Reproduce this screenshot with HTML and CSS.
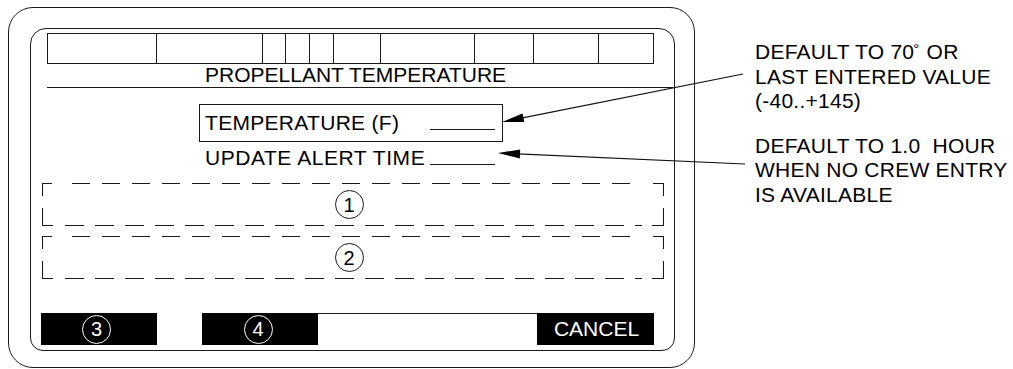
FILE: index.html
```html
<!DOCTYPE html>
<html>
<head>
<meta charset="utf-8">
<title>Propellant Temperature</title>
<link rel="stylesheet" href="styles.css">
</head>
<body>
<div class="page">
  <div class="device">
    <div class="screen">
      <div class="statusbar">
        <span class="cell"></span><span class="cell"></span><span class="cell"></span><span class="cell"></span><span class="cell"></span><span class="cell"></span><span class="cell"></span><span class="cell"></span><span class="cell"></span><span class="cell"></span>
      </div>
      <div class="title">PROPELLANT TEMPERATURE</div>
      <div class="form">
        <div class="row boxed"><span class="label">TEMPERATURE (F)</span><span class="field"></span></div>
        <div class="row plain"><span class="label">UPDATE ALERT TIME</span><span class="field"></span></div>
      </div>
      <div class="zone zone-a">
        <svg class="dash" viewBox="0 0 622 43" width="622" height="43">
          <path d="M0.5 13 V0.5 H10 M611 0.5 H621.5 V13 M0.5 25 V42.5 H11 M610 42.5 H621.5 V25"/>
          <line class="run-top" x1="30" y1="0.5" x2="600" y2="0.5"/>
          <line class="run-bot" x1="23" y1="42.5" x2="600" y2="42.5"/>
        </svg>
        <span class="num">1</span>
      </div>
      <div class="zone zone-b">
        <svg class="dash" viewBox="0 0 622 43" width="622" height="43">
          <path d="M0.5 13 V0.5 H10 M611 0.5 H621.5 V13 M0.5 25 V42.5 H11 M610 42.5 H621.5 V25"/>
          <line class="run-top" x1="30" y1="0.5" x2="600" y2="0.5"/>
          <line class="run-bot" x1="23" y1="42.5" x2="600" y2="42.5"/>
        </svg>
        <span class="num">2</span>
      </div>
      <div class="softkeys">
        <div class="key dark k3"><span class="num inv">3</span></div>
        <div class="key gap"></div>
        <div class="key dark k4"><span class="num inv">4</span></div>
        <div class="key blank"></div>
        <div class="key dark cancel">CANCEL</div>
      </div>
    </div>
  </div>
  <div class="notes">
    <p class="note note-a">DEFAULT TO 70<span class="deg">°</span> OR<br>LAST ENTERED VALUE<br>(-40..+145)</p>
    <p class="note note-b">DEFAULT TO 1.0&nbsp; HOUR<br>WHEN NO CREW ENTRY<br>IS AVAILABLE</p>
  </div>
  <svg class="arrows" width="1013" height="369" viewBox="0 0 1013 369">
    <line x1="743" y1="74" x2="515" y2="119.4"/>
    <polygon points="502,122 524.3,122.1 522.6,113.5"/>
    <line x1="745" y1="164" x2="512" y2="153.6"/>
    <polygon points="498,153 520.2,149.5 519.8,158.5"/>
  </svg>
</div>
</body>
</html>
```

FILE: styles.css
```css
* { box-sizing: border-box; }

html, body {
  margin: 0;
  padding: 0;
  background: #fff;
}

body {
  font-family: "Liberation Sans", Arial, sans-serif;
  font-size: 21px;
  color: #000;
}

.page {
  position: relative;
  width: 1013px;
  height: 369px;
  display: flex;
  align-items: flex-start;
  overflow: hidden;
}

.device {
  margin-left: 8px;
  margin-top: 7px;
  width: 687px;
  height: 361px;
  border: 1px solid #1a1a1a;
  border-radius: 25px;
  padding: 20px 0 0 21px;
  flex: none;
}

.screen {
  width: 645px;
  height: 323px;
  border: 1px solid #1a1a1a;
  border-radius: 16px 16px 13px 13px;
  display: flex;
  flex-direction: column;
}

.statusbar {
  margin: 4px 0 0 16px;
  width: 607px;
  height: 31px;
  border: 1px solid #1a1a1a;
  display: grid;
  grid-template-columns: 109px 106px 23px 24px 24px 47px 94px 59px 65px 54px;
}

.cell {
  border-right: 1px solid #1a1a1a;
}

.cell:last-child {
  border-right: none;
}

.title {
  margin-left: 16px;
  width: 626px;
  height: 24px;
  line-height: 21px;
  padding-left: 158px;
  border-bottom: 1px solid #1a1a1a;
  white-space: nowrap;
}

.form {
  margin: 16px 0 0 168px;
  width: 304px;
}

.row {
  display: flex;
  align-items: baseline;
  white-space: nowrap;
}

.row.boxed {
  height: 38px;
  line-height: 36px;
  border: 1px solid #1a1a1a;
  padding-left: 5px;
  letter-spacing: 0.3px;
}

.row.plain {
  margin-top: 2px;
  height: 28px;
  line-height: 28px;
  padding-left: 6px;
  letter-spacing: 0.55px;
}

.label {
  width: 225px;
  flex: none;
}

.field {
  display: inline-block;
  width: 65px;
  height: 0;
  border-bottom: 1px solid #1a1a1a;
}

.zone {
  position: relative;
  margin-left: 11px;
  width: 622px;
  height: 43px;
  display: flex;
  align-items: center;
  justify-content: center;
  padding-right: 8px;
}

.zone-a { margin-top: 11px; }
.zone-b { margin-top: 10px; }

.dash {
  position: absolute;
  left: 0;
  top: 0;
  fill: none;
  stroke: #1a1a1a;
  stroke-width: 1.1;
}

.dash .run-top { stroke-dasharray: 18 12; }
.dash .run-bot { stroke-dasharray: 19 11; }

.num {
  width: 29px;
  height: 29px;
  border: 1.3px solid #1a1a1a;
  border-radius: 50%;
  display: flex;
  align-items: center;
  justify-content: center;
  font-size: 20px;
  line-height: 26px;
  position: relative;
}

.num.inv {
  border-color: #fff;
  color: #fff;
}

.softkeys {
  margin: 34px 0 0 10px;
  height: 32px;
  display: flex;
}

.key {
  height: 32px;
  flex: none;
}

.key.dark {
  background: #000;
  color: #fff;
  display: flex;
  align-items: center;
  justify-content: center;
}

.k3, .k4 { width: 116px; }
.k3 { padding-right: 5px; }
.k4 { padding-right: 4px; }

.key.gap {
  width: 45px;
}

.key.blank {
  width: 219px;
  border-top: 1px solid #1a1a1a;
}

.key.cancel {
  width: 117px;
  line-height: 32px;
  padding-left: 2px;
}

.notes {
  margin-left: 60px;
  padding-top: 37px;
  flex: none;
  letter-spacing: 0.25px;
}

.note {
  margin: 0;
  line-height: 24.5px;
  white-space: nowrap;
}

.note-b {
  margin-top: 20px;
}

.deg {
  font-size: 15px;
  vertical-align: 5px;
  margin-left: -1px;
  margin-right: 1px;
}

.arrows {
  position: absolute;
  left: 0;
  top: 0;
  pointer-events: none;
}

.arrows line {
  stroke: #111;
  stroke-width: 1.2;
}

.arrows polygon {
  fill: #000;
}
```
